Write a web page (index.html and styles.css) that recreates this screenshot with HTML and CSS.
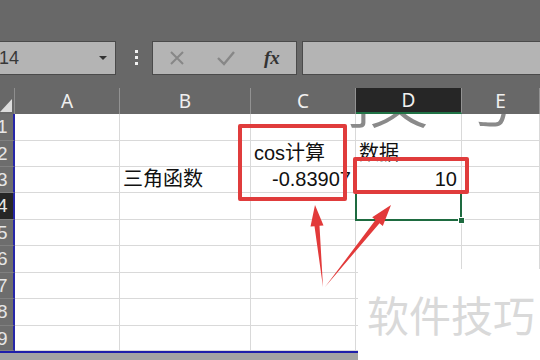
FILE: index.html
```html
<!DOCTYPE html>
<html>
<head>
    <meta charset="utf-8">
    <title>cos计算</title>
    <link rel="stylesheet" href="styles.css">
</head>
<body>
    <!-- name box + formula bar -->
    <div class="toolbar">
        <div class="namebox"><span>14</span><i class="caret"></i></div>
        <div class="grip"><b></b><b></b><b></b></div>
        <div class="fxgroup">
            <svg class="ico-x" width="16" height="16" viewBox="0 0 16 16"><path d="M2 2 L14 14 M14 2 L2 14" stroke="#878787" stroke-width="2" fill="none"/></svg>
            <svg class="ico-ok" width="20" height="16" viewBox="0 0 20 16"><path d="M2 8 L8 14 L18 2" stroke="#878787" stroke-width="2.4" fill="none"/></svg>
            <span class="fx">fx</span>
        </div>
        <div class="formula"></div>
    </div>

    <!-- sheet grid -->
    <div class="sheet">
        <div class="corner"><i></i></div>
        <div class="ch">A</div>
        <div class="ch">B</div>
        <div class="ch">C</div>
        <div class="ch sel">D</div>
        <div class="ch">E</div>

        <div class="rh">1</div><div class="c"></div><div class="c"></div><div class="c"></div><div class="c"></div><div class="c"></div>
        <div class="rh">2</div><div class="c"></div><div class="c"></div><div class="c">cos计算</div><div class="c">数据</div><div class="c"></div>
        <div class="rh">3</div><div class="c"></div><div class="c">三角函数</div><div class="c num">-0.83907</div><div class="c num">10</div><div class="c"></div>
        <div class="rh sel">4</div><div class="c"></div><div class="c"></div><div class="c"></div><div class="c"></div><div class="c"></div>
        <div class="rh">5</div><div class="c"></div><div class="c"></div><div class="c"></div><div class="c"></div><div class="c"></div>
        <div class="rh">6</div><div class="c"></div><div class="c"></div><div class="c"></div><div class="c"></div><div class="c"></div>
        <div class="rh">7</div><div class="c"></div><div class="c"></div><div class="c"></div><div class="c"></div><div class="c"></div>
        <div class="rh">8</div><div class="c"></div><div class="c"></div><div class="c"></div><div class="c"></div><div class="c"></div>
        <div class="rh">9</div><div class="c"></div><div class="c"></div><div class="c"></div><div class="c"></div><div class="c"></div>
    </div>
    <div class="footer"></div>

    <!-- overlays: stray watermark, selection, annotations -->
    <div class="ghost"><span>技巧</span></div>
    <div class="selection"><i></i></div>
    <div class="mark mark-c"></div>
    <div class="mark mark-d"></div>
    <svg class="arrows" width="540" height="360" viewBox="0 0 540 360">
        <polygon points="323,287 319.5,225.8 323.5,225.4 315,205 310.5,226.6 314.5,226.2" fill="#e23a3a"/>
        <polygon points="325,287 379.5,223.2 382.8,225.9 391,205 372.2,217.3 375.5,220" fill="#e23a3a"/>
    </svg>
    <div class="watermark">软件技巧</div>
</body>
</html>
```

FILE: styles.css
```css
html, body {
    margin:0;
    padding:0;
    width:540px;
    height:360px;
    overflow:hidden;
    background:#686868;
    font-family:"Liberation Sans", "Noto Sans CJK SC", sans-serif;
}
body { position:relative; }

/*** top: name box and formula bar ***/
.toolbar {
    display:flex;
    align-items:flex-start;
    height:88px;
    padding-top:41px;
    box-sizing:border-box;
}
.namebox {
    display:flex;
    align-items:center;
    margin-left:-10px;
    width:126px;
    height:34px;
    box-sizing:border-box;
    padding:0 8px 0 8px;
    background:#b4b4b4;
    border:1px solid #4a4a4a;
    color:#383838;
    font-size:18px;
}
.caret {
    margin-left:auto;
    width:0;
    height:0;
    border-left:4px solid transparent;
    border-right:4px solid transparent;
    border-top:4px solid #333;
}
.grip {
    display:flex;
    flex-direction:column;
    gap:3px;
    margin:9px 0 0 19px;
}
.grip b { width:3px; height:3px; background:#f2f2f2; }
.fxgroup {
    display:flex;
    align-items:center;
    margin-left:14px;
    width:145px;
    height:34px;
    box-sizing:border-box;
    background:#b4b4b4;
    border:1px solid #4a4a4a;
}
.ico-x { margin-left:16px; }
.ico-ok { margin-left:31px; }
.fx {
    margin-left:28px;
    font-family:"Liberation Serif", serif;
    font-style:italic;
    font-weight:bold;
    font-size:19px;
    color:#333;
}
.formula {
    flex:1;
    margin:0 -10px 0 5px;
    height:34px;
    box-sizing:border-box;
    background:#b4b4b4;
    border:1px solid #4a4a4a;
}

/*** the grid ***/
.sheet {
    display:grid;
    grid-template-columns:15px 105px 131px 105px 106px 1fr;
    grid-template-rows:26px 27px 26px 26px 27px 26px 27px 26px 27px 25px;
}
.corner {
    display:flex;
    align-items:flex-end;
    justify-content:flex-end;
    padding:0 2px 2px 0;
    border-right:1px solid #8e8e8e;
}
.corner i {
    width:0;
    height:0;
    border-left:12px solid transparent;
    border-bottom:13px solid #dcdcdc;
}
.ch {
    display:flex;
    align-items:center;
    justify-content:center;
    border-right:1px solid #929292;
    color:#f0f0f0;
    font-family:"Noto Sans", sans-serif;
    font-size:19px;
}
.ch.sel {
    background:#262626;
    border-bottom:2px solid #217346;
    box-sizing:border-box;
}
.rh {
    background:#6d6d6d;
    border-right:2px solid #2626a8;
    border-bottom:1px solid #808080;
    box-sizing:border-box;
    overflow:hidden;
    text-indent:-3px;
    color:#e6e6e6;
    font-size:19px;
    line-height:26px;
}
.rh.sel { background:#262626; }
.c {
    display:flex;
    align-items:flex-end;
    background:#fff;
    border-right:1px solid #d9d9d9;
    border-bottom:1px solid #d9d9d9;
    box-sizing:border-box;
    padding:0 4px 2px 3px;
    white-space:nowrap;
    color:#111;
    font-size:20px;
    line-height:22px;
}
.c.num { justify-content:flex-end; }

.footer {
    height:7px;
    border-top:2px solid #1e1eaa;
    background:#a3a3a3;
}

/*** overlays ***/
.ghost {
    position:absolute;
    top:114px;
    left:0;
    width:540px;
    height:23px;
    overflow:hidden;
}
.ghost span {
    position:absolute;
    left:345px;
    top:-73px;
    font-family:"Noto Sans CJK SC", sans-serif;
    font-weight:300;
    font-size:85px;
    line-height:1;
    color:#8a8a8a;
}
.selection {
    position:absolute;
    left:355px;
    top:192px;
    width:107px;
    height:29px;
    box-sizing:border-box;
    border:2px solid #1e6b40;
}
.selection i {
    position:absolute;
    right:-5px;
    bottom:-5px;
    width:5px;
    height:5px;
    background:#1e6b40;
    border:1px solid #fff;
}
.mark {
    position:absolute;
    box-sizing:border-box;
    border:4px solid #e03c3c;
    border-radius:2px;
}
.mark-c { left:238px; top:124px; width:109px; height:77px; }
.mark-d { left:353px; top:157px; width:116px; height:37px; }
.arrows { position:absolute; left:0; top:0; }
.watermark {
    position:absolute;
    left:358px;
    top:269px;
    right:0;
    bottom:0;
    background:#fff;
    padding:24px 0 0 9px;
    font-family:"Noto Sans CJK SC", sans-serif;
    font-size:42px;
    line-height:1;
    color:#d9d9d9;
}
```
